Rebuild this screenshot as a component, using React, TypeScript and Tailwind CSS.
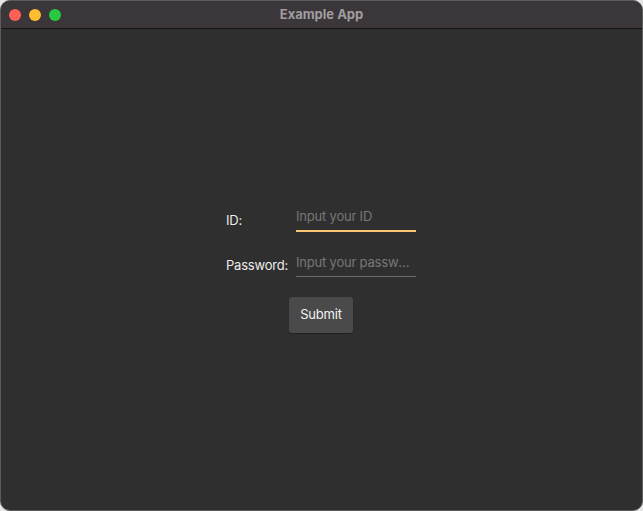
import React, { useState } from "react";

export default function App() {
  const [id, setId] = useState("");
  const [password, setPassword] = useState("");

  return (
    <div className="h-[511px] w-[643px] bg-[#e6e6e6] font-['Inter','Liberation_Sans',sans-serif]">
      <div className="flex h-full w-full flex-col overflow-hidden rounded-[10px] border border-[#5c5c5c] bg-[#2f2f2f]">
        {/* Title bar */}
        <div className="relative flex h-[28px] shrink-0 items-center justify-center border-b border-[#141414] bg-[#3a3639]">
          <div className="absolute left-[8px] top-[8px] flex gap-[8px]">
            <span className="h-[12px] w-[12px] rounded-full bg-[#fe5f57]" />
            <span className="h-[12px] w-[12px] rounded-full bg-[#febc2e]" />
            <span className="h-[12px] w-[12px] rounded-full bg-[#28c840]" />
          </div>
          <span className="text-[13px] font-bold text-[#a19da0]">Example App</span>
        </div>

        {/* Body */}
        <div className="flex flex-1 items-center justify-center pr-[1px]">
          <div className="flex flex-col items-center tracking-[-0.2px]">
            <div className="grid grid-cols-[70px_120px] items-center gap-y-[19px]">
              <label className="pt-[4px] text-[13px] text-[#ececec]">ID:</label>
              <input
                value={id}
                onChange={(e) => setId(e.target.value)}
                placeholder="Input your ID"
                className="h-[26px] w-[120px] border-b-2 border-[#f7c774] bg-transparent pb-[4px] text-[13px] text-[#ececec] outline-none placeholder:text-[#777777]"
              />
              <label className="pt-[4px] text-[13px] text-[#ececec]">Password:</label>
              <input
                type="password"
                value={password}
                onChange={(e) => setPassword(e.target.value)}
                placeholder="Input your password"
                className="h-[26px] w-[120px] truncate border-b border-[#6b6b6b] bg-transparent pb-[4px] text-[13px] text-[#ececec] outline-none placeholder:text-[#777777]"
              />
            </div>
            <button className="mt-[20px] h-[36px] w-[64px] rounded-[3px] bg-[#4a4a4a] text-[13px] text-[#f2f2f2] shadow-[0_1px_1px_rgba(0,0,0,0.3)]">
              Submit
            </button>
          </div>
        </div>
      </div>
    </div>
  );
}
